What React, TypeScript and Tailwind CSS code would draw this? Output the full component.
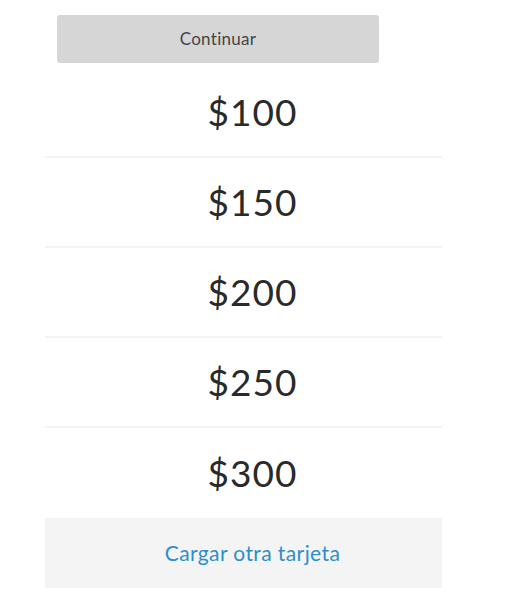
const amounts = ["$100", "$150", "$200", "$250", "$300"];

export default function App() {
  return (
    <div className="w-[514px] h-[610px] bg-white" style={{ fontFamily: "Lato, 'Noto Sans', sans-serif" }}>
      <div className="pt-[15px] pl-[57px]">
        <button className="w-[322px] h-[48px] bg-[#d6d6d6] rounded-[3px] text-[17px] tracking-[0.3px] text-[#454545] flex items-center justify-center">
          Continuar
        </button>
      </div>

      <div className="mt-[5px] ml-[45px] w-[397px]">
        {amounts.map((a, i) => (
          <div
            key={a}
            className={
              "h-[90px] flex items-center justify-center pl-[18px] text-[37px] tracking-[1px] text-[#2a2a2a] " +
              (i < amounts.length - 1 ? "border-b-2 border-[#f3f3f3]" : "")
            }
          >
            {a}
          </div>
        ))}
        <div className="h-[70px] bg-[#f4f4f4] flex items-center justify-center pl-[18px] text-[21px] tracking-[0.4px] text-[#2e8ec8]">
          Cargar otra tarjeta
        </div>
      </div>
    </div>
  );
}
